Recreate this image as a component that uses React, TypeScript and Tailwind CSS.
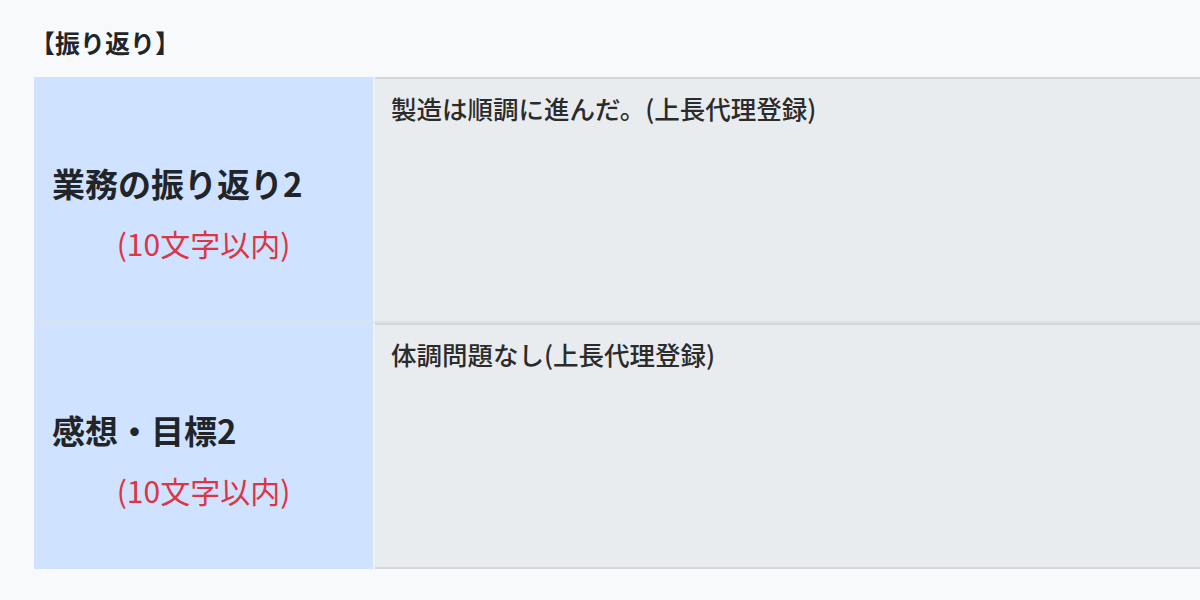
import React from "react";

const rows = [
  { label: "業務の振り返り2", value: "製造は順調に進んだ。(上長代理登録)", h: "h-[244px]" },
  { label: "感想・目標2", value: "体調問題なし(上長代理登録)", h: "h-[248px]" },
];

export default function App() {
  return (
    <div
      className="w-[1200px] h-[600px] overflow-hidden bg-[#f8f9fa] pt-[24px]"
      style={{ fontFamily: '"Noto Sans CJK JP", "Noto Sans", sans-serif' }}
    >
      <h2 className="ml-[30px] text-[25px] leading-[36px] font-bold text-[#212529]">【振り返り】</h2>
      <div className="mt-[17px] ml-[34px] flex flex-col">
        {rows.map((r, i) => (
          <div
            key={i}
            className={`flex ${r.h} ${i > 0 ? "border-t-2 border-[#dee2e6]" : ""}`}
          >
            <div className="w-[339px] shrink-0 bg-[#cfe2ff] flex flex-col justify-center pt-[26px]">
              <div className="pl-[18px] text-[33px] leading-[40px] font-bold text-[#212529] whitespace-nowrap">{r.label}</div>
              <div className="mt-[22px] text-center text-[30px] leading-[36px] text-[#dc3545]">(10文字以内)</div>
            </div>
            <div className="w-[2px] bg-[#eef1f4] shrink-0" />
            <div
              className={`flex-1 bg-[#e9ecef] border-t-2 border-[#d3d7dc] ${i === rows.length - 1 ? "border-b-2" : ""} pl-[16px] pt-[12px]`}
            >
              <div className="text-[25.5px] leading-[34px] font-medium text-[#2b2b2b] whitespace-nowrap">{r.value}</div>
            </div>
          </div>
        ))}
      </div>
    </div>
  );
}
